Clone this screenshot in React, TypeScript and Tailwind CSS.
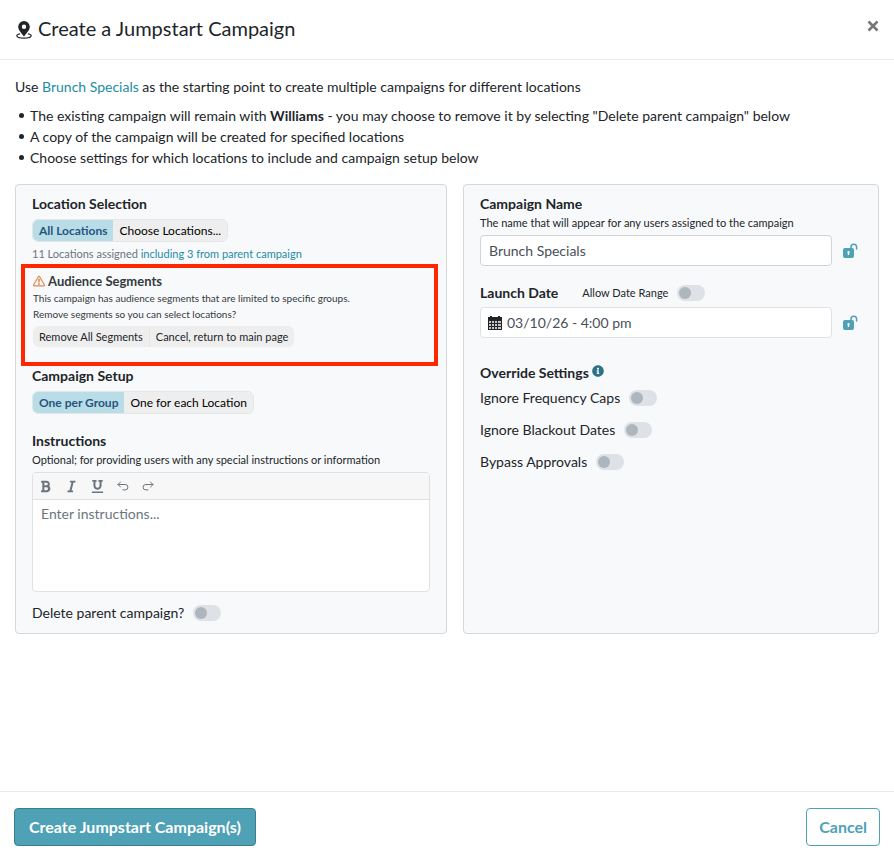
import { useState } from "react";
import { BsExclamationTriangle } from "react-icons/bs";
import { FaBold, FaInfoCircle, FaItalic, FaUnderline } from "react-icons/fa";

type SegmentedProps = {
  label: string;
  options: string[];
};

const Segmented = ({ label, options }: SegmentedProps) => {
  const [selected, setSelected] = useState(options[0]);

  return (
    <div
      role="group"
      aria-label={label}
      className="flex w-fit overflow-hidden rounded-md border border-[#e4e6e8] text-xs leading-[21px]"
    >
      {options.map((option) => (
        <button
          key={option}
          type="button"
          aria-pressed={selected === option}
          onClick={() => setSelected(option)}
          className={
            selected === option
              ? "bg-[#b8dde6] px-1.5 font-bold text-[#27557f]"
              : "bg-[#eeeeee] px-1.5 text-black"
          }
        >
          {option}
        </button>
      ))}
    </div>
  );
};

type ToggleProps = {
  label: string;
  small?: boolean;
};

const Toggle = ({ label, small }: ToggleProps) => (
  <label className="flex w-fit items-center gap-[9px]">
    <span className={small ? "text-[11px]" : "text-sm leading-5"}>{label}</span>
    <input
      type="checkbox"
      role="switch"
      className="h-4 w-7 appearance-none rounded-full bg-[#dee2e6] before:m-0.5 before:block before:size-3 before:rounded-full before:bg-[#adb5bd] checked:bg-[#4fa1b5] checked:before:ml-3.5 checked:before:bg-white"
    />
  </label>
);

const LocationIcon = () => (
  <svg viewBox="0 0 16 18" className="mt-1 h-[18px] w-4" aria-hidden="true">
    <path
      fillRule="evenodd"
      d="M8 0a5.8 5.8 0 0 1 5.8 5.8c0 3.6-3.2 6.1-5.8 9.7C5.4 11.900 2.200 9.400 2.200 5.800A5.800 5.800 0 0 1 8 0zm0 3.600a2.200 2.200 0 1 0 0 4.400 2.200 2.200 0 0 0 0-4.400z"
      fill="currentColor"
    />
    <path
      d="M3.600 12.800c-1.700.4-2.800 1-2.800 1.800 0 1.500 3.200 2.600 7.200 2.600s7.200-1.100 7.200-2.600c0-.8-1.100-1.400-2.800-1.800"
      fill="none"
      stroke="currentColor"
      strokeWidth="1.2"
      strokeLinecap="round"
    />
  </svg>
);

const UnlockIcon = () => (
  <svg viewBox="0 0 16 16" className="size-4" aria-hidden="true">
    <rect x="1" y="5" width="11" height="10" rx="2" fill="#4fa1b5" />
    <path
      d="M9 6V4a2.800 2.800 0 0 1 5.600 0V6"
      fill="none"
      stroke="#4fa1b5"
      strokeWidth="1.5"
      strokeLinecap="round"
    />
    <path
      d="M6.500 8a1.300 1.300 0 0 1 .7 2.300V12H5.800v-1.700A1.300 1.300 0 0 1 6.500 8z"
      fill="#fff"
    />
  </svg>
);

const CalendarIcon = () => (
  <svg viewBox="0 0 14 14" className="size-3.5 shrink-0" aria-hidden="true">
    <path d="M0 1h2V0h2v1h6V0h2v1h2v13H0z" fill="#212529" />
    <path
      d="M1 5h2v2H1zM4 5h2v2H4zM7 5h2v2H7zM10 5h3v2h-3zM1 8h2v2H1zM4 8h2v2H4zM7 8h2v2H7zM10 8h3v2h-3zM1 11h2v2H1zM4 11h2v2H4zM7 11h2v2H7zM10 11h3v2h-3z"
      fill="#c4c6c8"
    />
  </svg>
);

const UndoIcon = () => (
  <svg
    viewBox="0 0 12 12"
    className="size-3"
    fill="none"
    stroke="currentColor"
    strokeWidth="1"
    strokeLinecap="round"
    strokeLinejoin="round"
    aria-hidden="true"
  >
    <path d="M3.500 2 1 4.500 3.500 7M1 4.500h7.200a2.700 2.700 0 0 1 0 5.400H6" />
  </svg>
);

const RedoIcon = () => (
  <svg
    viewBox="0 0 12 12"
    className="size-3"
    fill="none"
    stroke="currentColor"
    strokeWidth="1"
    strokeLinecap="round"
    strokeLinejoin="round"
    aria-hidden="true"
  >
    <path d="M8.500 2 11 4.500 8.500 7M11 4.500H3.800a2.700 2.700 0 0 0 0 5.400H6" />
  </svg>
);

const heading = "text-sm leading-5 font-bold";
const bullet =
  "flex items-center gap-1.5 pl-1 before:size-[5px] before:shrink-0 before:rounded-full before:bg-[#212529]";

const App = () => {
  const [name, setName] = useState("Brunch Specials");
  const [date, setDate] = useState("03/10/26 - 4:00 pm");

  return (
    <div className="flex min-h-screen flex-col bg-white font-[Lato,sans-serif] text-sm text-[#212529]">
      <header className="flex items-start justify-between border-b border-[#e9ecef] pt-3.5 pr-[9px] pb-[17px] pl-4">
        <h1 className="flex items-center gap-1.5 text-xl leading-7">
          <LocationIcon />
          Create a Jumpstart Campaign
        </h1>
        <button
          type="button"
          aria-label="Close"
          className="flex size-6 items-center justify-center text-[#777777]"
        >
          <svg viewBox="0 0 12 12" className="size-3" aria-hidden="true">
            <path
              d="M1.500 1.500l9 9M10.500 1.500l-9 9"
              stroke="currentColor"
              strokeWidth="2.6"
            />
          </svg>
        </button>
      </header>

      <main className="flex-1 px-[15px] pt-4 pb-4">
        <p className="leading-[21px]">
          Use{" "}
          <a href="#campaign" className="text-[#1c8ca5]">
            Brunch Specials
          </a>{" "}
          as the starting point to create multiple campaigns for different
          locations
        </p>
        <ul className="mt-2 leading-[21px]">
          <li className={bullet}>
            <span>
              The existing campaign will remain with <b>Williams</b> - you may
              choose to remove it by selecting "Delete parent campaign" below
            </span>
          </li>
          <li className={bullet}>
            <span>
              A copy of the campaign will be created for specified locations
            </span>
          </li>
          <li className={bullet}>
            <span>
              Choose settings for which locations to include and campaign setup
              below
            </span>
          </li>
        </ul>

        <div className="mt-4 flex gap-4">
          <section className="w-1/2 rounded border border-[#d5d8db] bg-[#f8f9fb] px-4 pt-[9px] pb-2.5">
            <h2 className={heading}>Location Selection</h2>
            <div className="mt-[5px]">
              <Segmented
                label="Location Selection"
                options={["All Locations", "Choose Locations..."]}
              />
            </div>
            <p className="mt-[3px] text-[11px] leading-[18px] text-[#6c757d]">
              11 Locations assigned{" "}
              <a href="#parent" className="text-[#1c8ca5]">
                including 3 from parent campaign
              </a>
            </p>

            <div className="mt-px -mr-2 -ml-[11px] border-4 border-[#ff2600] px-2 pt-1 pb-[15px] text-[#343a40]">
              <h3 className="flex items-center gap-[3px] text-[13px] leading-[18px] font-bold">
                <BsExclamationTriangle className="size-3 stroke-current stroke-[0.5] text-[#dd8347]" />
                Audience Segments
              </h3>
              <p className="text-[10px] leading-4">
                This campaign has audience segments that are limited to specific
                groups.
                <br />
                Remove segments so you can select locations?
              </p>
              <div className="mt-1 flex w-fit overflow-hidden rounded-md bg-[#eeeeee] text-[11px] leading-[21px] text-[#212529]">
                <button type="button" className="px-1.5">
                  Remove All Segments
                </button>
                <button
                  type="button"
                  className="border-l border-[#e4e6e8] px-1.5"
                >
                  Cancel, return to main page
                </button>
              </div>
            </div>

            <h2 className={heading}>Campaign Setup</h2>
            <div className="mt-[5px]">
              <Segmented
                label="Campaign Setup"
                options={["One per Group", "One for each Location"]}
              />
            </div>

            <label htmlFor="instructions" className={`mt-[17px] block ${heading}`}>
              Instructions
            </label>
            <p className="text-[11px] leading-[18px]">
              Optional; for providing users with any special instructions or
              information
            </p>
            <div className="mt-[3px] overflow-hidden rounded border border-[#dee2e6] bg-white">
              <div className="flex h-[27px] items-center gap-[13px] border-b border-[#dee2e6] bg-[#f7f7f7] pl-1.5 text-[#6c757d]">
                <button type="button" aria-label="Bold">
                  <FaBold className="size-[13px]" />
                </button>
                <button type="button" aria-label="Italic">
                  <FaItalic className="size-[13px]" />
                </button>
                <button type="button" aria-label="Underline">
                  <FaUnderline className="size-[13px]" />
                </button>
                <button type="button" aria-label="Undo">
                  <UndoIcon />
                </button>
                <button type="button" aria-label="Redo">
                  <RedoIcon />
                </button>
              </div>
              <textarea
                id="instructions"
                placeholder="Enter instructions..."
                className="block h-[91px] w-full resize-none px-2 py-1 text-sm leading-5 outline-none placeholder:text-[#6c757d]"
              />
            </div>
            <div className="mt-[11px]">
              <Toggle label="Delete parent campaign?" />
            </div>
          </section>

          <section className="flex-1 rounded border border-[#d5d8db] bg-[#f8f9fb] px-4 pt-[9px] pb-2.5">
            <label htmlFor="name" className={`block ${heading}`}>
              Campaign Name
            </label>
            <p className="text-[11px] leading-[18px]">
              The name that will appear for any users assigned to the campaign
            </p>
            <div className="mt-[3px] flex items-center gap-2.5">
              <input
                id="name"
                value={name}
                onChange={(e) => setName(e.target.value)}
                className="h-[31px] min-w-0 flex-1 rounded-sm border border-[#ced4da] bg-white px-2 text-sm text-[#495057] outline-none"
              />
              <button type="button" aria-label="Lock name" className="mr-1">
                <UnlockIcon />
              </button>
            </div>

            <div className="mt-[17px] flex items-center gap-6">
              <label htmlFor="date" className={heading}>
                Launch Date
              </label>
              <Toggle label="Allow Date Range" small />
            </div>
            <div className="mt-1 flex items-center gap-2.5">
              <div className="flex h-[31px] min-w-0 flex-1 items-center gap-[5px] rounded-sm border border-[#dee2e6] bg-white px-[7px]">
                <CalendarIcon />
                <input
                  id="date"
                  value={date}
                  onChange={(e) => setDate(e.target.value)}
                  className="min-w-0 flex-1 text-sm text-[#495057] outline-none"
                />
              </div>
              <button type="button" aria-label="Lock date" className="mr-1">
                <UnlockIcon />
              </button>
            </div>

            <h2 className={`mt-[25px] flex items-start gap-[3px] ${heading}`}>
              Override Settings
              <FaInfoCircle className="mt-0.5 size-3 text-[#2f7486]" />
            </h2>
            <div className="mt-[5px] flex flex-col gap-3">
              <Toggle label="Ignore Frequency Caps" />
              <Toggle label="Ignore Blackout Dates" />
              <Toggle label="Bypass Approvals" />
            </div>
          </section>
        </div>
      </main>

      <footer className="flex items-center justify-between border-t border-[#e9ecef] px-3.5 pt-4 pb-[13px] text-base font-bold">
        <button
          type="button"
          className="h-[38px] rounded border border-[#397f90] bg-[#4fa1b5] px-3.5 text-white"
        >
          Create Jumpstart Campaign(s)
        </button>
        <button
          type="button"
          className="h-[38px] rounded border border-[#4fa1b5] bg-white px-3 text-[#4fa1b5]"
        >
          Cancel
        </button>
      </footer>
    </div>
  );
};

export default App;
